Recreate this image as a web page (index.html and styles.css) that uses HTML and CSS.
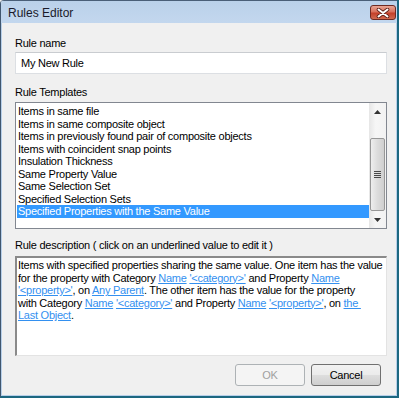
FILE: index.html
```html
<!DOCTYPE html>
<html>
<head>
<meta charset="utf-8">
<link rel="stylesheet" href="styles.css">
</head>
<body>
<div class="window">
  <div class="titlebar">
    <span class="title">Rules Editor</span>
    <div class="close">
      <svg width="14" height="10" viewBox="0 0 14 10"><path d="M2.5 1.5 L11.5 8.5 M11.5 1.5 L2.5 8.5" stroke="#5a2018" stroke-width="3.6" stroke-linecap="round"/><path d="M2.5 1.5 L11.5 8.5 M11.5 1.5 L2.5 8.5" stroke="#fff" stroke-width="2" stroke-linecap="round"/></svg>
    </div>
  </div>
  <div class="frame">
    <div class="client">
      <div class="label l-name">Rule name</div>
      <div class="input">My New Rule</div>
      <div class="label l-templates">Rule Templates</div>
      <div class="listbox">
        <div class="items">
          <div class="item">Items in same file</div>
          <div class="item">Items in same composite object</div>
          <div class="item">Items in previously found pair of composite objects</div>
          <div class="item">Items with coincident snap points</div>
          <div class="item">Insulation Thickness</div>
          <div class="item">Same Property Value</div>
          <div class="item">Same Selection Set</div>
          <div class="item">Specified Selection Sets</div>
          <div class="item selected">Specified Properties with the Same Value</div>
        </div>
        <div class="scrollbar">
          <div class="arrow up"><svg width="7" height="4" viewBox="0 0 7 4"><path d="M0 4 L3.5 0 L7 4Z" fill="#333"/></svg></div>
          <div class="track">
            <div class="thumb"><div class="grip"><span></span><span></span><span></span><span></span></div></div>
          </div>
          <div class="arrow down"><svg width="7" height="4" viewBox="0 0 7 4"><path d="M0 0 L3.5 4 L7 0Z" fill="#333"/></svg></div>
        </div>
      </div>
      <div class="label l-desc">Rule description ( click on an underlined value to edit it )</div>
      <div class="desc">
        <div class="line">Items with specified properties sharing the same value. One item has the value</div>
        <div class="line">for the property with Category <a>Name</a> <a>'&lt;category&gt;'</a> and Property <a>Name</a></div>
        <div class="line"><a>'&lt;property&gt;'</a>, on <a>Any Parent</a>. The other item has the value for the property</div>
        <div class="line">with Category <a>Name</a> <a>'&lt;category&gt;'</a> and Property <a>Name</a> <a>'&lt;property&gt;'</a>, on <a>the&nbsp;</a></div>
        <div class="line"><a>Last Object</a>.</div>
      </div>
      <div class="buttons">
        <div class="btn disabled">OK</div>
        <div class="btn">Cancel</div>
      </div>
    </div>
  </div>
</div>
</body>
</html>
```

FILE: styles.css
```css
html, body {
  margin: 0;
  padding: 0;
  background: #f0f0f0;
}
.window {
  width: 399px;
  height: 398px;
  box-sizing: border-box;
  display: flex;
  flex-direction: column;
  border-left: 1px solid #40566e;
  border-right: 2px solid #1c6780;
  border-bottom: 2px solid #1c6780;
  border-top-left-radius: 4px;
  overflow: hidden;
  font-family: "Liberation Sans", Arial, sans-serif;
  font-size: 11px;
  color: #000;
}
.titlebar {
  height: 22px;
  flex: none;
  border-top: 1px solid #4a5f78;
  background: linear-gradient(#bad1ea, #c3d7ee);
  display: flex;
  align-items: flex-start;
  justify-content: space-between;
  padding-left: 7px;
  padding-right: 1px;
}
.title {
  font-size: 12px;
  line-height: 12px;
  margin-top: 6px;
  color: #1a1a2a;
}
.close {
  width: 24px;
  height: 13px;
  margin-top: 4px;
  border: 1px solid #6e2a22;
  border-radius: 3px;
  background: linear-gradient(#e8a595 0%, #d9715c 45%, #c4402a 55%, #d06a50 100%);
  display: flex;
  align-items: center;
  justify-content: center;
}
.frame {
  flex: 1;
  min-height: 0;
  display: flex;
  border-left: 1px solid #b7cfe9;
  border-right: 1px solid #b7cfe9;
  border-bottom: 1px solid #b7cfe9;
}
.client {
  flex: 1;
  min-width: 0;
  background: #f0f0f0;
  padding: 0 9px 0 13px;
  display: flex;
  flex-direction: column;
  letter-spacing: -0.25px;
}
.label {
  line-height: 13px;
  height: 13px;
  white-space: nowrap;
}
.l-name { margin-top: 14px; }
.l-templates { margin-top: 12px; }
.l-desc { margin-top: 10px; }
.input {
  margin-top: 2px;
  height: 22px;
  box-sizing: border-box;
  background: #fff;
  border: 1px solid #dcdfe3;
  border-top-color: #c9ccd0;
  padding-left: 5px;
  line-height: 20px;
}
.listbox {
  margin-top: 3px;
  height: 127px;
  box-sizing: border-box;
  border: 1px solid #828790;
  background: #fff;
  display: flex;
  min-width: 0;
}
.items {
  flex: 1;
  min-width: 0;
  overflow: hidden;
  padding: 2px 0 0 1px;
}
.item {
  height: 12.5px;
  line-height: 12.5px;
  padding-left: 1px;
  white-space: nowrap;
}
.item.selected {
  background: #3399ff;
  color: #fff;
}
.scrollbar {
  width: 17px;
  flex: none;
  display: flex;
  flex-direction: column;
  background: linear-gradient(90deg, #e6e6e6, #f6f6f6 40%, #f2f2f2);
}
.arrow {
  height: 17px;
  flex: none;
  display: flex;
  align-items: center;
  justify-content: center;
}
.track {
  flex: 1;
  display: flex;
  flex-direction: column;
  justify-content: flex-end;
}
.thumb {
  height: 73px;
  margin: 0 1px 0 1px;
  box-sizing: border-box;
  border: 1px solid #979797;
  border-radius: 2px;
  background: linear-gradient(90deg, #eeeeee, #dcdcdc 50%, #cfcfcf);
  display: flex;
  align-items: center;
  justify-content: center;
}
.grip {
  display: flex;
  flex-direction: column;
  gap: 1px;
}
.grip span {
  display: block;
  width: 7px;
  height: 1px;
  background: #4a4a4a;
}
.desc {
  margin-top: 4px;
  height: 100px;
  box-sizing: border-box;
  background: #fff;
  border-top: 2px solid #8a8a8a;
  border-left: 2px solid #8a8a8a;
  border-right: 1px solid #e3e3e3;
  border-bottom: 1px solid #e3e3e3;
  padding: 1px 0 0 1px;
  overflow: hidden;
}
.line {
  height: 12.5px;
  line-height: 12.5px;
  white-space: nowrap;
}
.desc a {
  color: #3390f0;
  text-decoration: underline;
}
.buttons {
  margin-top: 8px;
  display: flex;
  justify-content: flex-end;
  gap: 6px;
  padding-right: 6px;
}
.btn {
  width: 70px;
  height: 22px;
  box-sizing: border-box;
  border: 1px solid #707070;
  border-radius: 3px;
  background: linear-gradient(#f2f2f2 0%, #ebebeb 48%, #dddddd 52%, #cfcfcf 100%);
  text-align: center;
  line-height: 20px;
}
.btn.disabled {
  border-color: #adb2b5;
  background: #f4f4f4;
  color: #a0a0a0;
}
```
